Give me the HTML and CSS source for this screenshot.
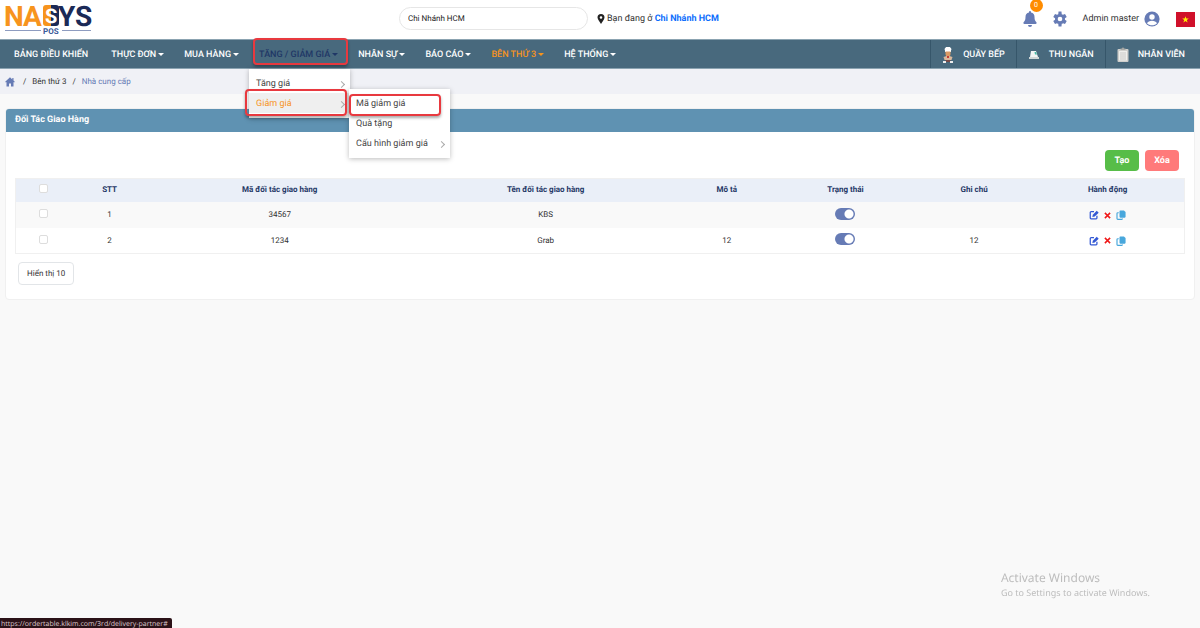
FILE: index.html
```html
<!DOCTYPE html>
<html lang="vi">
<head>
<meta charset="utf-8">
<title>Đối Tác Giao Hàng</title>
<link rel="stylesheet" href="styles.css">
</head>
<body>
<svg class="defs" width="0" height="0" aria-hidden="true">
  <symbol id="edit" viewBox="0 0 12 12"><path d="M6 2H2.500A1 1 0 0 0 1.500 3V9.500A1 1 0 0 0 2.500 10.500H8.500A1 1 0 0 0 9.500 9.500V7" fill="none" stroke="currentColor" stroke-width="1.500"/><path d="M4 8.500 4.600 5.600 9.300.900 11.600 3.200 6.900 7.900Z" fill="currentColor"/></symbol>
  <symbol id="remove" viewBox="0 0 12 12"><path d="M2.500 2.500 9.500 9.500M9.500 2.500 2.500 9.500" stroke="currentColor" stroke-width="2"/></symbol>
  <symbol id="copy" viewBox="0 0 12 12"><path d="M5.200.5H9.500L11.500 2.500V8.200A1 1 0 0 1 10.500 9.200H5.200A1 1 0 0 1 4.200 8.200V1.500A1 1 0 0 1 5.200.5Z" fill="currentColor"/><path d="M3.300 3.300H2.200A1 1 0 0 0 1.200 4.300V10.200A1 1 0 0 0 2.200 11.200H6.800A1 1 0 0 0 7.800 10.200" fill="none" stroke="currentColor" stroke-width="1.400"/></symbol>
</svg>
<header class="top">
  <a class="logo" href="#" aria-label="NASYS POS">
    <svg width="88" height="34" viewBox="0 0 88 34">
      <path d="M46 4V25H41A3 3 0 0 1 38 22V7A3 3 0 0 1 41 4Z" fill="#f7941d"/><path d="M46 4H51A3 3 0 0 1 54 7V22A3 3 0 0 1 51 25H46Z" fill="#1b2a57"/>
      <g class="logo-letters"><text x="-1" y="25" fill="#f7941d">N</text><text x="18" y="25" fill="#f7941d">A</text><text class="logo-mark" x="40" y="22" fill="#fff">S</text><text x="53" y="25" fill="#1b2a57">Y</text><text x="70" y="25" fill="#1b2a57">S</text></g>
      <path d="M0 29.500H36M57 29.500H86" stroke="#8e9cc0"/>
      <text class="logo-sub" x="38" y="33">POS</text>
    </svg>
  </a>
  <div class="branch">
    <input class="branch-input" type="text" value="Chi Nhánh HCM" aria-label="Chi nhánh">
    <p class="location"><svg width="8" height="10" viewBox="0 0 8 10"><path d="M4 0A3.500 3.500 0 0 0 .5 3.500C.5 5.500 3 8 4 10 5 8 7.500 5.500 7.500 3.500A3.500 3.500 0 0 0 4 0ZM4 2.200A1.300 1.300 0 1 1 4 4.800 1.300 1.300 0 0 1 4 2.200Z" fill="#222"/></svg><span>Bạn đang ở <a href="#">Chi Nhánh HCM</a></span></p>
  </div>
  <div class="account">
    <button class="icon-button bell" aria-label="Thông báo"><svg width="14" height="16" viewBox="0 0 14 16"><path d="M7 0A1 1 0 0 0 6 1V1.600A4.500 4.500 0 0 0 2.500 6C2.500 9 1.800 10 .6 11.200.1 11.900.5 13 1.400 13H12.600C13.500 13 13.900 11.900 13.400 11.200 12.200 10 11.500 9 11.500 6A4.500 4.500 0 0 0 8 1.600V1A1 1 0 0 0 7 0ZM5 14A2 2 0 0 0 9 14Z" fill="currentColor"/></svg><span class="badge">0</span></button>
    <button class="icon-button" aria-label="Cài đặt"><svg width="16" height="16" viewBox="0 0 24 24"><path d="M19.400 13a7.500 7.500 0 0 0 0-2l2.700-2-2.600-4.500-3 1.300a8 8 0 0 0-1.900-1.100L14.200.8H9.800L9.400 4.700a8 8 0 0 0-1.900 1.100l-3-1.300L1.900 9l2.700 2a7.500 7.500 0 0 0 0 2l-2.700 2 2.600 4.500 3-1.300a8 8 0 0 0 1.900 1.100l.4 3.900h4.400l.4-3.900a8 8 0 0 0 1.900-1.100l3 1.300 2.600-4.500ZM12 15.500a3.500 3.500 0 1 1 0-7 3.500 3.500 0 0 1 0 7Z" fill="currentColor"/></svg></button>
    <button class="user">Admin master<svg width="16" height="16" viewBox="0 0 16 16"><circle cx="8" cy="8" r="7.600" fill="#667bb5"/><circle cx="8" cy="6" r="2.700" fill="#fff"/><path d="M3 12.300C4.300 8.900 11.700 8.900 13 12.300 10.500 15 5.500 15 3 12.300Z" fill="#fff"/></svg></button>
    <button class="flag" aria-label="Tiếng Việt"><svg width="19" height="15" viewBox="0 0 19 15"><path d="M0 0H19V15H0Z" fill="#d0102a"/><path d="M9.500 4.200 10.300 6.600H12.800L10.800 8.100 11.600 10.500 9.500 9 7.400 10.500 8.200 8.100 6.200 6.600H8.700Z" fill="#fff000"/></svg></button>
  </div>
</header>

<nav class="main-nav">
  <ul class="menu">
    <li><a href="#">BẢNG ĐIỀU KHIỂN</a></li>
    <li><a class="caret" href="#">THỰC ĐƠN</a></li>
    <li><a class="caret" href="#">MUA HÀNG</a></li>
    <li class="open"><a class="caret marked" href="#">TĂNG / GIẢM GIÁ</a>
      <ul class="dropdown">
        <li><a class="more" href="#">Tăng giá</a></li>
        <li class="open"><a class="more current marked" href="#">Giảm giá</a>
          <ul class="dropdown submenu">
            <li><a class="marked" href="#">Mã giảm giá</a></li>
            <li><a href="#">Quà tặng</a></li>
            <li><a class="more" href="#">Cấu hình giảm giá</a></li>
          </ul>
        </li>
      </ul>
    </li>
    <li><a class="caret" href="#">NHÂN SỰ</a></li>
    <li><a class="caret" href="#">BÁO CÁO</a></li>
    <li><a class="caret active" href="#">BÊN THỨ 3</a></li>
    <li><a class="caret" href="#">HỆ THỐNG</a></li>
  </ul>
  <div class="stations">
    <a href="#"><svg width="12" height="16" viewBox="0 0 12 16"><path d="M3 5V3.500A2 2 0 0 1 3.500.8 3 3 0 0 1 8.500.8 2 2 0 0 1 9 3.500V5Z" fill="#fff"/><path d="M3.500 4.500H8.500V7A2.500 2.500 0 0 1 3.500 7Z" fill="#d99a64"/><path d="M1.500 10 4.500 9H7.500L10.500 10 9.500 13H2.500Z" fill="#d9b79b"/><path d="M5 9H7V11H5Z" fill="#c33e35"/><path d="M3.500 13H8.500V15H3.500Z" fill="#7a4b48"/><path d="M1 14H4V16H1ZM8 14H11V16H8Z" fill="#eee"/></svg>QUẦY BẾP</a>
    <a href="#"><svg width="12" height="12" viewBox="0 0 12 12"><path d="M3 2H8L10 8H2Z" fill="#f1f4f4"/><path d="M6.500 3H8L9 5.500H7Z" fill="#48b9a5"/><path d="M1 8H11V10H1Z" fill="#d0d6d7"/></svg>THU NGÂN</a>
    <a href="#"><svg width="12" height="16" viewBox="0 0 12 16"><rect x=".5" y="2" width="11" height="13" rx="1" fill="#cfcfcc"/><path d="M2 4H10V13.500H2Z" fill="#efefec"/><path d="M3.500 3V1.500H5A1 1 0 0 1 7 1.500H8.500V3Z" fill="#a8a9a6"/><path d="M3 6H9M3 8H9M3 10H9M3 12H9" stroke="#bbb" stroke-width=".7"/></svg>NHÂN VIÊN</a>
  </div>
</nav>

<nav class="crumbs" aria-label="Breadcrumb">
  <a href="#" aria-label="Trang chủ"><svg width="10" height="10" viewBox="0 0 10 10"><path d="M5 .3.200 4.700.900 5.500 1.500 5V9.500H4V6.500H6V9.500H8.500V5L9.100 5.500 9.800 4.700 8.500 3.500V1H7.300V2.400Z" fill="#667bb5"/></svg></a>
  <span>/</span><a class="crumb-parent" href="#">Bên thứ 3</a><span>/</span><a href="#">Nhà cung cấp</a>
</nav>

<main class="card">
  <h1>Đối Tác Giao Hàng</h1>
  <div class="card-body">
    <div class="actions"><button class="create">Tạo</button><button class="delete">Xóa</button></div>
    <table>
      <colgroup><col class="c-check"><col class="c-index"><col class="c-code"><col class="c-name"><col class="c-desc"><col class="c-state"><col class="c-note"><col class="c-act"></colgroup>
      <thead><tr><th><input class="tick" type="checkbox" aria-label="Chọn tất cả"></th><th>STT</th><th>Mã đối tác giao hàng</th><th>Tên đối tác giao hàng</th><th>Mô tả</th><th>Trạng thái</th><th>Ghi chú</th><th>Hành động</th></tr></thead>
      <tbody>
        <tr><td><input class="tick" type="checkbox" aria-label="Chọn 34567"></td><td>1</td><td>34567</td><td>KBS</td><td></td><td><input class="switch" type="checkbox" role="switch" checked aria-label="Trạng thái KBS"></td><td></td><td><div class="tools"><button class="edit" aria-label="Sửa"><svg width="10" height="10"><use href="#edit"/></svg></button><button class="remove" aria-label="Xóa dòng"><svg width="9" height="9"><use href="#remove"/></svg></button><button class="copy" aria-label="Sao chép"><svg width="10" height="10"><use href="#copy"/></svg></button></div></td></tr>
        <tr><td><input class="tick" type="checkbox" aria-label="Chọn 1234"></td><td>2</td><td>1234</td><td>Grab</td><td>12</td><td><input class="switch" type="checkbox" role="switch" checked aria-label="Trạng thái Grab"></td><td>12</td><td><div class="tools"><button class="edit" aria-label="Sửa"><svg width="10" height="10"><use href="#edit"/></svg></button><button class="remove" aria-label="Xóa dòng"><svg width="9" height="9"><use href="#remove"/></svg></button><button class="copy" aria-label="Sao chép"><svg width="10" height="10"><use href="#copy"/></svg></button></div></td></tr>
      </tbody>
    </table>
    <button class="page-size">Hiển thị 10</button>
  </div>
</main>

<aside class="activate"><p class="activate-title">Activate Windows</p><p>Go to Settings to activate Windows.</p></aside>
<div class="status">https://ordertable.klkim.com/3rd/delivery-partner#</div>
</body>
</html>
```
FILE: styles.css
```css
* { box-sizing: border-box; }
body { margin: 0; min-height: 100vh; background: #f9f9f9; color: #333; font: 9px/12px Roboto, sans-serif; text-rendering: geometricPrecision; overflow: hidden; }
ul, p, h1 { margin: 0; padding: 0; list-style: none; }
a { color: inherit; text-decoration: none; }
button { margin: 0; padding: 0; border: 0; background: none; color: inherit; font: inherit; text-rendering: inherit; cursor: pointer; }
input { text-rendering: inherit; }
svg { display: block; flex: none; }
.defs { position: absolute; }

.top { display: grid; grid-template-columns: 399px 1fr auto; align-items: center; height: 39px; padding-right: 5px; background: #fff; }
.logo { padding: 0 0 4px 5px; }
.logo svg { overflow: visible; }
.logo-letters { font: 700 28px Roboto, sans-serif; }
.logo-letters .logo-mark { font-size: 20px; }
.logo-sub { font: 700 8px Roboto, sans-serif; fill: #3b5a9a; }
.branch { display: flex; align-items: center; gap: 9px; padding-bottom: 2px; }
.branch-input { width: 189px; height: 23px; padding: 0 8px; border: 1px solid #e6e6e6; border-radius: 12px; background: #fff; color: #222; font: inherit; font-size: 8px; }
.location { display: flex; align-items: center; gap: 2px; }
.location a { color: #0d6efd; font-weight: 700; }
.account { display: flex; align-items: center; padding-bottom: 1px; }
.icon-button { position: relative; margin-right: 15px; color: #667bb5; }
.badge { position: absolute; left: 7px; top: -12px; width: 13px; height: 13px; border-radius: 50%; background: #ff8c00; color: #fff; font-size: 7px; line-height: 13px; text-align: center; }
.user { display: flex; align-items: center; gap: 5px; margin-right: 16px; }

.main-nav { display: flex; justify-content: space-between; height: 30px; border-top: 1px solid #8ba3b1; border-bottom: 1px solid #8ba3b1; background: #48697d; color: #fff; font-size: 9px; font-weight: 500; }
.menu { display: flex; padding-left: 4px; }
.menu > li { position: relative; }
.menu > li:first-child { margin-right: 3px; }
.menu > li > a { display: flex; align-items: center; height: 28px; padding: 1px 10px 0; white-space: nowrap; }
.caret::after { content: ""; margin-left: 2px; border: 3px solid transparent; border-top: 3px solid; border-bottom: 0; }
.menu > .open > a { color: #1f3766; }
.menu .active { color: #f7941d; }
.marked { position: relative; }
.marked::before { content: ""; position: absolute; z-index: 3; inset: -2px 0 3px 4px; border: 2px solid #e8393f; border-radius: 4px; box-shadow: 0 2px 3px #0005; pointer-events: none; }
.dropdown { position: absolute; z-index: 1; left: 0; top: 29px; width: 101px; padding: 4px 0 5px; background: #fff; box-shadow: 0 1px 5px #0004; color: #444; font-weight: 400; }
.dropdown li { position: relative; }
.dropdown a { display: flex; align-items: center; justify-content: space-between; height: 20px; padding: 2px 6px 0 7px; white-space: nowrap; }
.more::after { content: ""; width: 4px; height: 4px; border: solid #aaa; border-width: 1px 1px 0 0; transform: rotate(45deg); }
.dropdown .current { background: #efefef; color: #f7941d; }
.dropdown .current::before { inset: -4px 3px -3px -4px; }
.submenu { left: 100px; top: -4px; }
.submenu .marked::before { inset: 1px 9px -3px 0; }
.stations { display: flex; }
.stations a { display: flex; align-items: center; gap: 9px; padding: 1px 11px 0; border-left: 1px solid #36566a; }
.stations a:last-child { padding-right: 15px; }

.crumbs { display: flex; align-items: center; gap: 6px; height: 25px; padding-left: 5px; background: #f0f1f6; font-size: 8px; }
.crumbs a { color: #667bb5; }
.crumbs .crumb-parent { color: #333; }
.crumbs a:first-child { margin-right: 2px; }

.card { margin: 14px 5px 0; border: 1px solid #f0f0f0; border-radius: 4px; background: #fff; overflow: hidden; }
.card h1 { height: 23px; padding: 0 9px; background: #5f92b2; color: #fff; font-size: 9px; font-weight: 700; line-height: 22px; }
.card-body { padding: 18px 9px 14px; }
.actions { display: flex; justify-content: flex-end; gap: 6px; padding-right: 6px; margin-bottom: 7px; }
.actions button { width: 34px; height: 21px; border-radius: 4px; color: #fff; font-weight: 700; }
.create { background: #57bd48; }
.delete { background: #ff7a7a; }
table { width: 100%; table-layout: fixed; border-collapse: collapse; border: 1px solid #f0f0f0; font-size: 8px; }
.c-check { width: 4.8%; } .c-index { width: 6.5%; } .c-code { width: 22.6%; } .c-name { width: 22.9%; } .c-desc { width: 8.1%; } .c-state { width: 12.2%; } .c-note { width: 9.8%; } .c-act { width: 13.1%; }
th, td { height: 26px; padding: 1px 0 0; text-align: center; vertical-align: middle; }
th { height: 23px; padding: 0; background: #eaeff8; color: #1f3766; font-weight: 700; }
tbody tr:first-child { background: #f9f9f9; }
.tick { appearance: none; display: block; width: 9px; height: 9px; margin: 0 auto 3px; border: 1px solid #ddd; border-radius: 2px; background: #fff; }
.switch { appearance: none; display: block; width: 20px; height: 12px; margin: 0 auto 3px; border-radius: 6px; background: radial-gradient(circle at 14px 6px, #fff 4px, #667bb5 5px); }
.tools { display: flex; align-items: center; justify-content: center; gap: 4px; }
.edit { color: #3358d4; } .remove { color: #f01818; } .copy { color: #48a7dc; }
.page-size { display: block; height: 23px; margin: 8px 0 0 3px; padding: 0 8px; border: 1px solid #e2e5e8; border-radius: 4px; background: #fff; font-size: 8px; }

.activate { position: fixed; right: 50px; bottom: 28px; color: #bdbdbd; font: 9px/14px "Noto Sans", sans-serif; }
.activate-title { font-size: 12px; line-height: 17px; }
.status { position: fixed; left: 0; bottom: -4px; padding: 0 4px 0 1px; border-radius: 0 2px 0 0; background: #2b1218; color: #dcc8cd; font: 7px/14px "Open Sans", sans-serif; }
```
